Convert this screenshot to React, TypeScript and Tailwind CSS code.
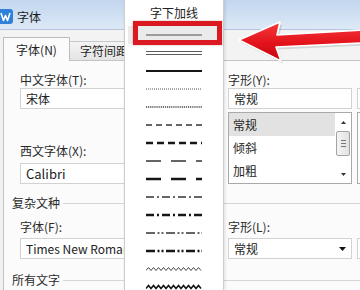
import clsx from "clsx"

type Underline = { w: number; color: string; dash?: string; double?: boolean; wave?: boolean }

const underlines: Underline[] = [
  { w: 1, color: "#4f4f4f" },
  { w: 1, color: "#5c5c5c", double: true },
  { w: 2, color: "#161616" },
  { w: 1, color: "#555555", dash: "1 1" },
  { w: 1.6, color: "#444444", dash: "1.2 0.9" },
  { w: 1.3, color: "#333333", dash: "6 4" },
  { w: 2.4, color: "#161616", dash: "7 4" },
  { w: 1.3, color: "#333333", dash: "15 10" },
  { w: 2.4, color: "#161616", dash: "15 10" },
  { w: 1.3, color: "#333333", dash: "8 3 2 3" },
  { w: 2.4, color: "#161616", dash: "8 3 2 3" },
  { w: 1.3, color: "#333333", dash: "9 2.5 2 2 2 2.5" },
  { w: 2.4, color: "#161616", dash: "9 2.5 2 2 2 2.5" },
  { w: 0.9, color: "#333333", wave: true },
  { w: 1.6, color: "#161616", wave: true },
]

function wavePoints() {
  const pts: string[] = []
  for (let x = 0, i = 0; x <= 56; x += 2.5, i++) pts.push(`${x},${i % 2 ? 2.5 : 5.5}`)
  return pts.join(" ")
}

function UnderlineSample({ line }: { line: Underline }) {
  return (
    <svg width="56" height="8" viewBox="0 0 56 8">
      {line.wave ? (
        <polyline points={wavePoints()} fill="none" stroke={line.color} strokeWidth={line.w} />
      ) : line.double ? (
        <>
          <line x1="0" y1="2.5" x2="56" y2="2.5" stroke={line.color} strokeWidth={line.w} />
          <line x1="0" y1="5.5" x2="56" y2="5.5" stroke={line.color} strokeWidth={line.w} />
        </>
      ) : (
        <line x1="0" y1="4" x2="56" y2="4" stroke={line.color} strokeWidth={line.w} strokeDasharray={line.dash} />
      )}
    </svg>
  )
}

function WpsLogo() {
  return (
    <svg width="15" height="15" viewBox="0 0 15 15" className="-ml-[2px] shrink-0">
      <rect x="0" y="0" width="15" height="15" rx="3" fill="#2f80d8" />
      <path d="M3 4 L5.5 11.5 L7.5 6.5 L9.5 11.5 L12 4" fill="none" stroke="#fff" strokeWidth="1.6" strokeLinejoin="round" />
    </svg>
  )
}

function Label({ children, className }: { children?: React.ReactNode; className?: string }) {
  return <div className={clsx("h-[16px] whitespace-nowrap text-[12px] leading-[16px] text-[#2a2a2a]", className)}>{children}</div>
}

function Field({ children, className, arrow }: { children?: React.ReactNode; className?: string; arrow?: boolean }) {
  return (
    <div
      className={clsx(
        "flex h-[21px] items-center overflow-hidden whitespace-nowrap border border-[#d2d2d2] bg-white pl-[5px] pr-[5px] text-[12px] leading-[16px] text-[#222]",
        className
      )}
    >
      <span className="flex-1">{children}</span>
      {arrow && (
        <svg width="7" height="4" viewBox="0 0 7 4">
          <path d="M0 0 H7 L3.5 4 Z" fill="#111" />
        </svg>
      )}
    </div>
  )
}

function Scrollbar() {
  return (
    <div className="flex w-[16px] flex-col">
      <div className="flex h-[18px] items-center justify-center">
        <svg width="5" height="3" viewBox="0 0 5 3">
          <path d="M0 3 L2.5 0 L5 3 Z" fill="#333" />
        </svg>
      </div>
      <div className="mx-[1px] flex h-[25px] flex-col items-center justify-center gap-[2px] rounded-[2px] border border-[#a3a3a3] bg-gradient-to-r from-[#f4f4f4] to-[#e2e2e2]">
        <div className="h-px w-[5px] bg-[#777]" />
        <div className="h-px w-[5px] bg-[#777]" />
        <div className="h-px w-[5px] bg-[#777]" />
      </div>
      <div className="flex-1" />
      <div className="flex h-[18px] items-center justify-center">
        <svg width="5" height="3" viewBox="0 0 5 3">
          <path d="M0 0 L5 0 L2.5 3 Z" fill="#333" />
        </svg>
      </div>
    </div>
  )
}

function GroupHeader({ title, className }: { title: string; className?: string }) {
  return (
    <div className={clsx("flex items-center gap-[3px] pl-[8px] text-[12px] leading-[16px] text-[#2a2a2a]", className)}>
      <span>{title}</span>
      <div className="h-px flex-1 bg-[#d6d6d6]" />
    </div>
  )
}

export default function App() {
  return (
    <div className="relative h-[290px] w-[360px] overflow-hidden bg-[#f1f1f1] font-['Noto_Sans_CJK_SC','Noto_Sans',sans-serif] text-[#262626]">
      <div className="flex w-[440px] flex-col">
        {/* title bar */}
        <div className="flex h-[30px] items-center gap-[4px] border-b border-[#b4c6dc] bg-gradient-to-b from-[#c2d6ee] to-[#dde9f6] pt-[4px]">
          <WpsLogo />
          <span className="text-[12px] leading-[16px] text-[#1b1b1b]">字体</span>
        </div>

        {/* tabs */}
        <div className="ml-[3px] flex h-[31px] items-end border-b border-[#c4c4c4] bg-[#f3f3f3]">
          <div className="-mb-px flex h-[24px] w-[67px] items-center justify-center border border-b-0 border-[#bdbdbd] bg-[#fbfbfb] text-[12px] leading-[16px]">
            字体(N)
          </div>
          <div className="flex h-[19px] w-[70px] items-center border-r border-t border-[#c8c8c8] bg-gradient-to-b from-[#f4f4f4] to-[#e4e4e4] pl-[10px] text-[12px] leading-[16px]">
            字符间距
          </div>
        </div>

        {/* tab panel */}
        <div className="ml-[3px] h-[230px] border-l border-[#c4c4c4] bg-[#fbfbfb] pt-[11px]">
          <div className="grid grid-cols-[203px_124px_100px] gap-x-[5px] pl-[16px]">
            <div className="flex flex-col">
              <Label>中文字体(T):</Label>
              <Field>宋体</Field>
              <Label className="mt-[34px]">西文字体(X):</Label>
              <Field className="mt-[4px] text-[13px]">Calibri</Field>
            </div>
            <div className="flex flex-col">
              <Label>字形(Y):</Label>
              <Field>常规</Field>
              <div className="mt-[3px] flex h-[72px] border border-[#a9a9a9] bg-white">
                <div className="flex flex-1 flex-col text-[12px] leading-[16px]">
                  <div className="flex h-[23px] items-center bg-[#e2e2e2] pl-[4px]">常规</div>
                  <div className="flex h-[23px] items-center pl-[4px]">倾斜</div>
                  <div className="flex h-[23px] items-center pl-[4px]">加粗</div>
                </div>
                <Scrollbar />
              </div>
            </div>
            {/* size column, only its left edge shows */}
            <div className="flex flex-col">
              <Label />
              <Field />
              <div className="mt-[3px] h-[72px] border border-[#a9a9a9] bg-white" />
            </div>
          </div>

          <GroupHeader title="复杂文种" className="mt-[11px]" />

          <div className="mt-[8px] grid grid-cols-[203px_124px_100px] gap-x-[5px] pl-[16px]">
            <div className="flex flex-col">
              <Label>字体(F):</Label>
              <Field className="mt-[3px] text-[12.5px]">Times New Roman</Field>
            </div>
            <div className="flex flex-col">
              <Label>字形(L):</Label>
              <Field className="mt-[3px]" arrow>
                常规
              </Field>
            </div>
            <div className="flex flex-col">
              <Label />
              <Field className="mt-[3px]" />
            </div>
          </div>

          <GroupHeader title="所有文字" className="mt-[13px]" />
        </div>
      </div>

      {/* underline style dropdown */}
      <div className="absolute left-[124px] top-0 flex h-[290px] w-[100px] flex-col border-x border-[#cdcdcd] bg-white shadow-[1px_0_3px_rgba(0,0,0,0.12)]">
        <div className="flex h-[26px] shrink-0 items-center justify-center text-[12px] leading-[16px] text-[#222]">字下加线</div>
        {underlines.map((line, i) => (
          <div
            key={i}
            className={clsx("flex h-[18px] shrink-0 items-center justify-center", i === 0 && "mx-[3px] bg-[#ebebeb]")}
          >
            <UnderlineSample line={line} />
          </div>
        ))}
      </div>

      {/* red highlight box */}
      <div className="absolute left-[133px] top-[21px] h-[24px] w-[89px] border-[5px] border-[#da1a20] shadow-[0_0_2px_rgba(120,0,0,0.35)]" />

      {/* red arrow */}
      <svg className="absolute left-[234px] top-[16px] overflow-visible" width="130" height="50" viewBox="0 0 130 50">
        <defs>
          <linearGradient id="arrowFill" x1="0" y1="0" x2="0" y2="1">
            <stop offset="0" stopColor="#f43a3f" />
            <stop offset="0.55" stopColor="#e3121a" />
            <stop offset="1" stopColor="#c00810" />
          </linearGradient>
        </defs>
        <polygon
          points="6,25 47,7 44,20 130,15 130,28 43,32 48,46"
          fill="#000"
          opacity="0.12"
          transform="translate(1,1.5)"
        />
        <polygon
          points="5,24 46,6 43,19 128,14 128,27 42,31 47,45"
          fill="url(#arrowFill)"
          stroke="#fff"
          strokeWidth="1.6"
          strokeLinejoin="round"
        />
      </svg>
    </div>
  )
}
